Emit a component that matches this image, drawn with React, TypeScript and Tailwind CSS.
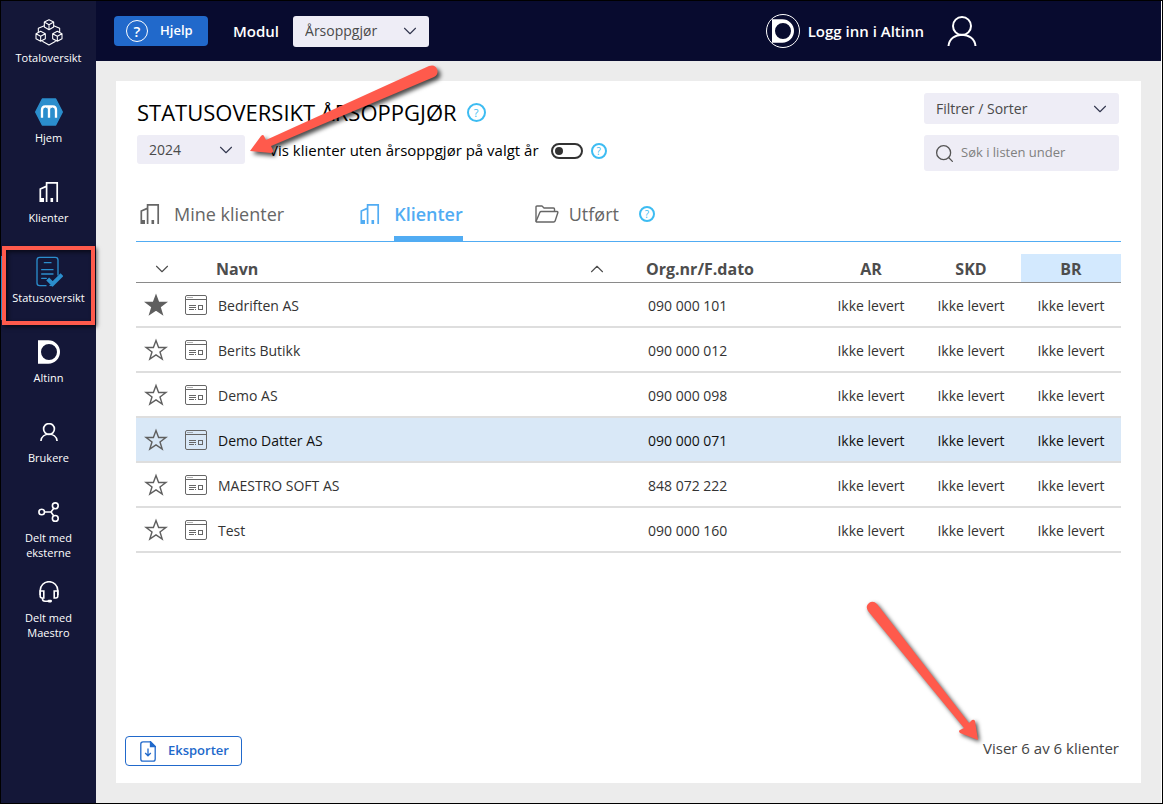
import { useState } from "react";
import { ChevronDown, ChevronUp, Search } from "lucide-react";
import { clsx } from "clsx";

// ── Ikoner ─────────────────────────────────────────────────────────────────────

function CubesIcon() {
  return (
    <svg width="28" height="28" viewBox="0 0 84 84" fill="none" stroke="currentColor" strokeWidth="3.2" strokeLinejoin="round">
      <path d="M42 5l14 7v15l-14 8-14-8V12zM28 12l14 8 14-8M42 20v15" />
      <path d="M17 40l14 7v15l-14 8-14-8V47zM3 47l14 8 14-8M17 55v15" />
      <path d="M67 40l14 7v15l-14 8-14-8V47zM53 47l14 8 14-8M67 55v15" />
      <path d="M28 23L10 31v12M56 23l18 8v12M22 70l20 11 20-11" />
    </svg>
  );
}

function MaestroIcon() {
  return (
    <svg width="28" height="28" viewBox="0 0 84 84" fill="none">
      <path d="M22 3h40l20 39-20 39H22L2 42z" fill="#2b8ecd" stroke="#2b8ecd" strokeWidth="4" strokeLinejoin="round" />
      <path d="M21 59V36q0-11 10-11h22q10 0 10 11v23M42 26v33" stroke="#fff" strokeWidth="7" />
      <path d="M33 27q9 2 9 11 0-9 9-11" stroke="#fff" strokeWidth="3" />
    </svg>
  );
}

function BuildingsIcon() {
  return (
    <svg width="20" height="20" viewBox="0 0 20 20" fill="none" stroke="currentColor" strokeWidth="1.7">
      <path d="M1.3 20V7l6-2.6M7.6 20V.9h10.6V20" />
      <path d="M11.5 16h2.6v4h-2.6zM2 16h3v4H2z" fill="currentColor" stroke="none" />
    </svg>
  );
}

function StatusIcon() {
  return (
    <svg width="28" height="32" viewBox="0 0 84 96" fill="none" stroke="#2b8ecd" strokeWidth="4" strokeLinecap="round">
      <path d="M33 89H14Q6 89 6 81V12Q6 4 14 4h47q8 0 8 8v45M52 89l-7-1" />
      <path d="M28 20h20M20 41h34M20 54h34M20 67h14" />
      <path d="M38 69l15 15 28-28" strokeWidth="12" strokeLinecap="butt" />
    </svg>
  );
}

function AltinnIcon() {
  return (
    <svg width="22" height="24" viewBox="0 0 66 72" fill="currentColor">
      <path fillRule="evenodd" d="M0 1h31a35 35 0 0 1 0 70H0zM33 12a24 24 0 1 0 0 48 24 24 0 0 0 0-48z" />
    </svg>
  );
}

function PersonIcon({ size, stroke }: { size: number; stroke: number }) {
  return (
    <svg width={size} height={size} viewBox="0 0 30 30" fill="none" stroke="currentColor" strokeWidth={stroke}>
      <circle cx="15" cy="10" r="9" />
      <path d="M1.5 30C3 15 27 15 28.5 30" />
    </svg>
  );
}

function ShareIcon() {
  return (
    <svg width="22" height="22" viewBox="0 0 22 22" fill="none" stroke="currentColor" strokeWidth="1.6">
      <circle cx="3.7" cy="11" r="2.8" />
      <circle cx="17.3" cy="4.8" r="2.9" />
      <circle cx="17.3" cy="17.4" r="2.9" />
      <path d="M6.5 11H13M15.8 7.3L13 11l2.8 4" />
    </svg>
  );
}

function HeadsetIcon() {
  return (
    <svg width="22" height="22" viewBox="0 0 22 22" fill="none" stroke="currentColor" strokeWidth="1.6">
      <path d="M2.2 14V9.5a8.8 8.8 0 0 1 17.6 0V14" />
      <path d="M2.2 10h3.6v7H4.2q-2 0-2-2zM19.8 10h-3.6v7h1.6q2 0 2-2z" />
      <path d="M4.5 17v1q0 2.2 2.5 2.2h3" />
      <rect x="9.5" y="18.8" width="4.5" height="2.6" rx="1.3" fill="currentColor" stroke="none" />
    </svg>
  );
}

function FolderIcon() {
  return (
    <svg width="24" height="18" viewBox="0 0 24 18" fill="none" stroke="currentColor" strokeWidth="1.4" strokeLinejoin="round" className="shrink-0">
      <path d="M1 16.5V2q0-1 1-1h5l2 2h9.5q1 0 1 1v2.5" />
      <path d="M1 16.5L4.8 7.5q.4-1 1.400-1H22q1.200 0 .8 1.200l-2.600 8q-.4 1.300-1.600 1.300H1.500z" />
    </svg>
  );
}

function ClientIcon() {
  return (
    <svg width="22" height="20" viewBox="0 0 22 20" fill="none" stroke="#666" strokeWidth="1">
      <rect x=".5" y=".5" width="21" height="19" rx="1.5" />
      <path d="M1 4.5h20M2.5 2.5h1M4.5 2.5h1M6.500 2.500h1M4 10.500h7M4 12.500h7M4 14.500h5M10 14.500h1" />
      <rect x="13.5" y="10.5" width="4" height="4" />
    </svg>
  );
}

function StarIcon({ filled }: { filled: boolean }) {
  return (
    <svg width="24" height="24" viewBox="0 0 24 24" fill={filled ? "#5f5f5f" : "none"} stroke="#5f5f5f" strokeWidth="1.4">
      <path d="M12 2.5l2.6 7h7.3L16 13.9l2.200 7.200L12 16.800l-6.200 4.300L8 13.900 2.100 9.500h7.300z" />
    </svg>
  );
}

function ExportIcon() {
  return (
    <svg width="16" height="21" viewBox="0 0 16 21" fill="none" stroke="currentColor" strokeWidth="1.3">
      <path d="M10.500.8H3Q.8.800.8 3v15q0 2.200 2.200 2.200h10q2.200 0 2.200-2.200V5.500z" />
      <path d="M10.500.8v4.700h4.700z" fill="currentColor" />
      <path d="M8 7.500v7M5.200 12L8 14.800 10.800 12" />
    </svg>
  );
}

// ── Data ───────────────────────────────────────────────────────────────────────

const navItems = [
  { label: "Totaloversikt", icon: <CubesIcon /> },
  { label: "Hjem", icon: <MaestroIcon /> },
  { label: "Klienter", icon: <BuildingsIcon /> },
  { label: "Statusoversikt", icon: <StatusIcon />, active: true },
  { label: "Altinn", icon: <AltinnIcon /> },
  { label: "Brukere", icon: <PersonIcon size={18} stroke={2.8} /> },
  { label: "Delt med eksterne", icon: <ShareIcon /> },
  { label: "Delt med Maestro", icon: <HeadsetIcon /> },
];

const clients = [
  { name: "Bedriften AS", org: "090 000 101", favorite: true },
  { name: "Berits Butikk", org: "090 000 012" },
  { name: "Demo AS", org: "090 000 098" },
  { name: "Demo Datter AS", org: "090 000 071", selected: true },
  { name: "MAESTRO SOFT AS", org: "848 072 222" },
  { name: "Test", org: "090 000 160" },
];

// ── Småkomponenter ─────────────────────────────────────────────────────────────

function HelpDot({ large }: { large?: boolean }) {
  return (
    <button
      aria-label="Hjelp"
      className={clsx(
        "flex shrink-0 items-center justify-center rounded-full border-2 border-[#3dbcf2] leading-none text-[#3dbcf2]",
        large ? "size-[19px] text-[11px]" : "size-4 text-[10px]"
      )}
    >
      ?
    </button>
  );
}

function Dropdown({ label, value, className }: { label: string; value: string; className: string }) {
  return (
    <div className={clsx("relative shrink-0", className)}>
      <select
        aria-label={label}
        className="size-full appearance-none rounded-[3px] bg-[#eeedf6] pr-8 pl-3 text-sm text-[#4a4a4a]"
      >
        <option>{value}</option>
      </select>
      <ChevronDown size={22} strokeWidth={1.2} className="pointer-events-none absolute inset-y-0 right-2 my-auto text-[#33384f]" />
    </div>
  );
}

function Sidebar() {
  return (
    <nav className="w-[95px] shrink-0 bg-[#141738] pt-[15px]">
      {navItems.map(item => (
        <a key={item.label} href="#" className="relative flex h-20 flex-col items-center pt-0.5 text-white">
          <span className="flex h-7 items-center">{item.icon}</span>
          <span className="mt-1 flex w-[60px] justify-center text-center text-[11px] leading-[15px]">
            {item.label}
          </span>
          {item.active && (
            <>
              <span className="absolute top-0 left-0 h-16 w-px bg-[#2b8ecd]" />
              <span className="absolute -top-2.5 right-px left-px h-[79px] border-[4px] border-[#ff5a4c] shadow-[2px_2px_4px_rgba(0,0,0,0.6),inset_2px_2px_4px_rgba(0,0,0,0.6)]" />
            </>
          )}
        </a>
      ))}
    </nav>
  );
}

function TopBar() {
  return (
    <header className="flex h-[60px] items-center bg-[#080b2f] pl-[18px] text-white">
      <button className="flex h-[30px] w-[94px] shrink-0 items-center gap-3 rounded-[4px] bg-[#2169cb] pl-3 text-[13px] font-semibold">
        <span className="flex size-[22px] items-center justify-center rounded-full border border-white text-[15px] leading-none">?</span>
        Hjelp
      </button>
      <span className="mr-3.5 ml-[25px] text-[15px] font-semibold">Modul</span>
      <Dropdown label="Modul" value="Årsoppgjør" className="h-[31px] w-[136px]" />
      <a href="#" className="ml-auto flex items-center gap-2 text-[15px] font-semibold">
        <span className="flex size-[34px] items-center justify-center rounded-full border border-white pl-px">
          <AltinnIcon />
        </span>
        Logg inn i Altinn
      </a>
      <button aria-label="Bruker" className="mr-[184px] ml-[23px]">
        <PersonIcon size={30} stroke={2} />
      </button>
    </header>
  );
}

function Tab({ label, icon, active, onClick }: { label: string; icon: React.ReactNode; active: boolean; onClick: () => void }) {
  return (
    <button
      role="tab"
      aria-selected={active}
      onClick={onClick}
      className={clsx("flex h-[54px] items-center gap-3.5 text-[18px]", active ? "font-semibold text-[#51acf3]" : "text-[#666]")}
    >
      <span className="flex w-5">{icon}</span>
      <span className={clsx("flex h-full items-center border-b-[5px] pt-[5px]", active ? "border-[#51acf3]" : "border-transparent")}>
        {label}
      </span>
    </button>
  );
}

function ClientTable() {
  return (
    <table className="w-full table-fixed border-separate border-spacing-0 text-[14px] text-[#333]">
      <colgroup>
        <col className="w-10" />
        <col />
        <col className="w-[210px]" />
        <col className="w-[100px]" />
        <col className="w-[100px]" />
        <col className="w-[100px]" />
      </colgroup>
      <thead>
        <tr className="text-[16px] text-[#4d4d4d] *:h-[29px] *:border-b *:border-[#8a8a8a] *:pt-0.5 *:font-bold">
          <th aria-label="Favoritt">
            <ChevronDown size={22} strokeWidth={1.2} className="ml-[15px]" />
          </th>
          <th>
            <div className="flex items-center justify-between pr-[3px] pl-10">
              Navn
              <ChevronUp size={22} strokeWidth={1.2} />
            </div>
          </th>
          <th className="pl-[35px] text-left">Org.nr/F.dato</th>
          <th>AR</th>
          <th>SKD</th>
          <th className="bg-[#d3e9fe]">BR</th>
        </tr>
      </thead>
      <tbody>
        {clients.map(c => (
          <tr
            key={c.org}
            className={clsx("*:h-[45px] *:border-b-2 *:border-[#dedede] *:pt-px", c.selected && "bg-[#d9e8f7] text-[#111]")}
          >
            <td>
              <button aria-label="Favoritt" className="flex w-full justify-center">
                <StarIcon filled={!!c.favorite} />
              </button>
            </td>
            <td>
              <div className="flex items-center gap-[11px] pl-[9px]">
                <ClientIcon />
                {c.name}
              </div>
            </td>
            <td className="pl-[37px]">{c.org}</td>
            <td className="text-center">Ikke levert</td>
            <td className="text-center">Ikke levert</td>
            <td className="text-center">Ikke levert</td>
          </tr>
        ))}
      </tbody>
    </table>
  );
}

// ── Piler ──────────────────────────────────────────────────────────────────────

function YearArrow() {
  return (
    <svg width="200" height="104" className="pointer-events-none absolute -top-[19px] left-[129px] drop-shadow-[3px_3px_2px_rgba(0,0,0,0.7)]" fill="#ff5a4c">
      <path d="M5 89L16 74q2-2 3 0l2 4L184 4q6-2 8 3t-3 8L26 84l2 4q1 3-2 3z" />
    </svg>
  );
}

function CountArrow() {
  return (
    <svg width="125" height="150" className="pointer-events-none absolute right-[156px] bottom-[38px] drop-shadow-[2px_2px_2px_rgba(0,0,0,0.7)]" fill="#ff5a4c">
      <path d="M118 145L100 138q-2-2 0-3l4-2L8 16q-3-5 1-8t8 1l92 119 3-3q2-1 3 1z" />
    </svg>
  );
}

// ── Side ───────────────────────────────────────────────────────────────────────

export default function App() {
  const [tab, setTab] = useState("klienter");

  return (
    <div className="flex min-h-screen border border-black bg-white pr-px font-['Open_Sans','Noto_Sans',sans-serif]">
      <Sidebar />
      <div className="flex min-w-0 flex-1 flex-col bg-[#ececec]">
        <TopBar />
        <main className="relative m-5 flex flex-1 flex-col bg-white">
          <div className="flex justify-between pt-3 pr-[22px] pl-[21px]">
            <div className="flex flex-col gap-1">
              <div className="flex h-[38px] items-center gap-2.5">
                <h1 className="text-[22px] text-black">STATUSOVERSIKT ÅRSOPPGJØR</h1>
                <HelpDot large />
              </div>
              <div className="flex items-center">
                <Dropdown label="År" value="2024" className="h-[29px] w-[108px]" />
                <label className="mt-0.5 ml-6 flex items-center gap-3 text-[15px] text-black">
                  Vis klienter uten årsoppgjør på valgt år
                  <input
                    type="checkbox"
                    className="flex h-4 w-8 appearance-none items-center rounded-full border-2 border-[#333] px-0.5 before:size-2 before:rounded-full before:bg-[#333] checked:justify-end"
                  />
                </label>
                <span className="mt-0.5 ml-2">
                  <HelpDot />
                </span>
              </div>
            </div>
            <div className="flex w-[195px] shrink-0 flex-col gap-[11px]">
              <Dropdown label="Filtrer / Sorter" value="Filtrer / Sorter" className="h-[31px]" />
              <label className="flex h-9 items-center gap-1.5 rounded-[3px] bg-[#eeedf6] px-2.5">
                <Search size={21} strokeWidth={1.5} className="shrink-0 text-[#555]" />
                <input
                  aria-label="Søk i listen"
                  placeholder="Søk i listen under"
                  className="w-full min-w-0 bg-transparent text-[13px] outline-none placeholder:text-[#808080]"
                />
              </label>
            </div>
          </div>

          <div className="mx-5 flex h-[71px] items-end border-b border-[#51acf3] pl-1">
            <div role="tablist" className="flex gap-[72px] *:first:pr-1">
              <Tab label="Mine klienter" icon={<BuildingsIcon />} active={tab === "mine"} onClick={() => setTab("mine")} />
              <Tab label="Klienter" icon={<BuildingsIcon />} active={tab === "klienter"} onClick={() => setTab("klienter")} />
              <Tab label="Utført" icon={<FolderIcon />} active={tab === "utfort"} onClick={() => setTab("utfort")} />
            </div>
            <span className="flex h-[54px] items-center pl-5">
              <HelpDot />
            </span>
          </div>

          <div className="px-5 pt-3">
            <ClientTable />
          </div>

          <footer className="mt-auto flex items-start justify-between pt-6 pr-[22px] pb-[17px] pl-[9px]">
            <button className="flex h-[30px] w-[117px] items-center gap-3 rounded-[4px] border border-[#2169cb] pl-3.5 text-[13px] font-semibold text-[#2169cb]">
              <ExportIcon />
              Eksporter
            </button>
            <span className="text-[15px] leading-6 text-[#444]">Viser 6 av 6 klienter</span>
          </footer>

          <YearArrow />
          <CountArrow />
        </main>
      </div>
    </div>
  );
}
